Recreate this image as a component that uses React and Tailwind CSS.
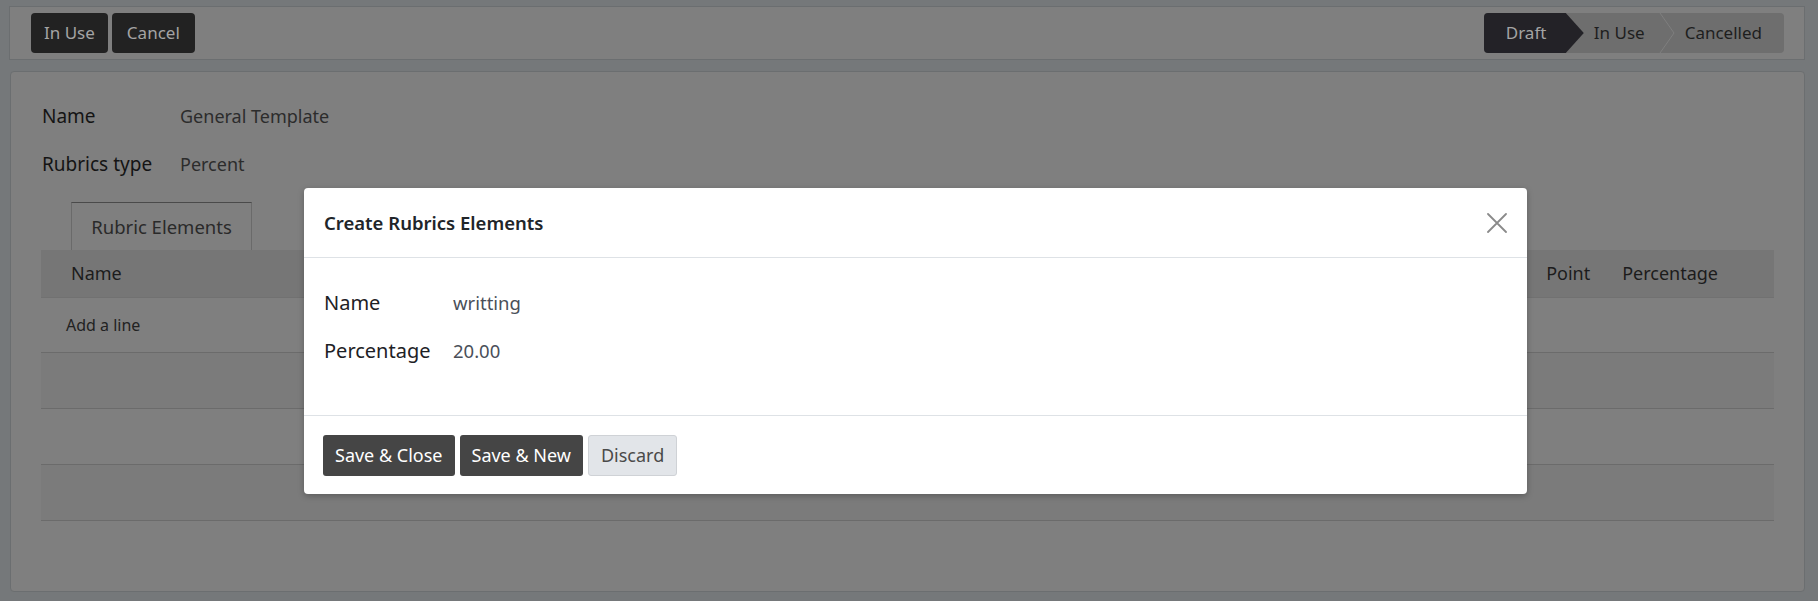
import React from 'react';

const font = { fontFamily: '"Noto Sans", "Open Sans", sans-serif' };

const StatusBar = () => (
  <div className="flex h-[40px] items-stretch overflow-hidden rounded-[4px] bg-[#6e6e6e] text-[17px]">
    <div className="flex w-[100px] items-center bg-[#232227] pl-[22px] text-[#a4a4a4] [clip-path:polygon(0_0,82%_0,100%_50%,82%_100%,0_100%)]">
      Draft
    </div>
    <div className="flex items-center pl-[10px] text-[#1e1e1e]">In Use</div>
    <svg width="40" height="40" viewBox="0 0 40 40" className="shrink-0">
      <polyline points="15,0 29,20 15,40" fill="none" stroke="#7f7f7f" strokeWidth="1" />
    </svg>
    <div className="flex items-center pr-[22px] text-[#1e1e1e]">Cancelled</div>
  </div>
);

const Field = ({ label, value, labelWidth, labelClass, valueClass }) => (
  <div className="flex h-[48px] items-center">
    <div className={labelClass} style={{ width: labelWidth }}>{label}</div>
    <div className={valueClass}>{value}</div>
  </div>
);

const App = () => {
  return (
    <div className="relative h-[601px] overflow-hidden bg-[#75787a] pl-[9px] pr-[13px] pt-[6px]" style={font}>
      {/* Control panel */}
      <div className="flex h-[54px] items-center justify-between border border-[#6b6e70] bg-[#7f7f7f] pl-[21px] pr-[20px]">
        <div className="flex gap-[4px]">
          <button className="h-[40px] rounded-[4px] bg-[#222222] px-[13px] text-[17px] text-[#a4a4a4]">In Use</button>
          <button className="h-[40px] rounded-[4px] bg-[#222222] px-[15px] text-[17px] text-[#a4a4a4]">Cancel</button>
        </div>
        <StatusBar />
      </div>

      {/* Sheet */}
      <div className="ml-[1px] mt-[11px] h-[521px] rounded-[4px] border border-[#6b6e70] bg-[#7f7f7f] pt-[20px]">
        <div className="px-[31px]">
          <Field
            label="Name"
            value="General Template"
            labelWidth={138}
            labelClass="text-[19px] text-[#141414]"
            valueClass="text-[18px] text-[#2c2c2c]"
          />
          <Field
            label="Rubrics type"
            value="Percent"
            labelWidth={138}
            labelClass="text-[19px] text-[#141414]"
            valueClass="text-[18px] text-[#2c2c2c]"
          />
        </div>

        <div className="mt-[14px] px-[30px]">
          {/* Tabs */}
          <div className="flex pl-[30px]">
            <div className="flex h-[48px] w-[181px] items-center justify-center border-x border-t border-[#6a6a6a] border-t-[#4a4a4a] text-[18.5px] text-[#2a2a2a]">
              Rubric Elements
            </div>
          </div>

          {/* Table */}
          <div>
            <div className="flex h-[48px] items-center border-b border-[#717171] bg-[#767676] pr-[56px] text-[18px] text-[#1c1c1c]">
              <div className="flex-1 pl-[30px]">Name</div>
              <div className="w-[76px]">Point</div>
              <div>Percentage</div>
            </div>
            <div className="flex h-[55px] items-center border-b border-[#6b6b6b] pl-[25px] text-[16px] text-[#222222]">
              Add a line
            </div>
            <div className="h-[56px] border-b border-[#6b6b6b] bg-[#7b7b7b]" />
            <div className="h-[56px] border-b border-[#6b6b6b]" />
            <div className="h-[56px] border-b border-[#6b6b6b] bg-[#7b7b7b]" />
          </div>
        </div>
      </div>

      {/* Modal */}
      <div className="absolute left-[304px] top-[188px] w-[1223px] rounded-[4px] bg-white shadow-[0_2px_6px_rgba(0,0,0,0.25)]">
        <div className="flex h-[70px] items-center justify-between border-b border-[#dee2e6] pl-[20px] pr-[20px]">
          <h4 className="text-[18.5px] font-semibold text-[#212529]">Create Rubrics Elements</h4>
          <svg width="20" height="20" viewBox="0 0 20 20">
            <path d="M1 1 L19 19 M19 1 L1 19" stroke="#8a8a8a" strokeWidth="1.8" strokeLinecap="round" />
          </svg>
        </div>
        <div className="pb-[40px] pl-[20px] pt-[21px]">
          <Field
            label="Name"
            value="writting"
            labelWidth={129}
            labelClass="text-[20px] text-[#1d2125]"
            valueClass="text-[18.5px] text-[#4a4f59]"
          />
          <Field
            label="Percentage"
            value="20.00"
            labelWidth={129}
            labelClass="text-[20px] text-[#1d2125]"
            valueClass="text-[18.5px] text-[#4a4f59]"
          />
        </div>
        <div className="flex gap-[5px] border-t border-[#dee2e6] pb-[18px] pl-[19px] pt-[19px]">
          <button className="h-[41px] rounded-[3px] bg-[#454545] px-[12px] text-[18px] text-white">Save &amp; Close</button>
          <button className="h-[41px] rounded-[3px] bg-[#454545] px-[12px] text-[18px] text-white">Save &amp; New</button>
          <button className="h-[41px] rounded-[3px] border border-[#cfd2d6] bg-[#e2e5e9] px-[12px] text-[18px] text-[#4a4a4a]">Discard</button>
        </div>
      </div>
    </div>
  );
};

export default App;
